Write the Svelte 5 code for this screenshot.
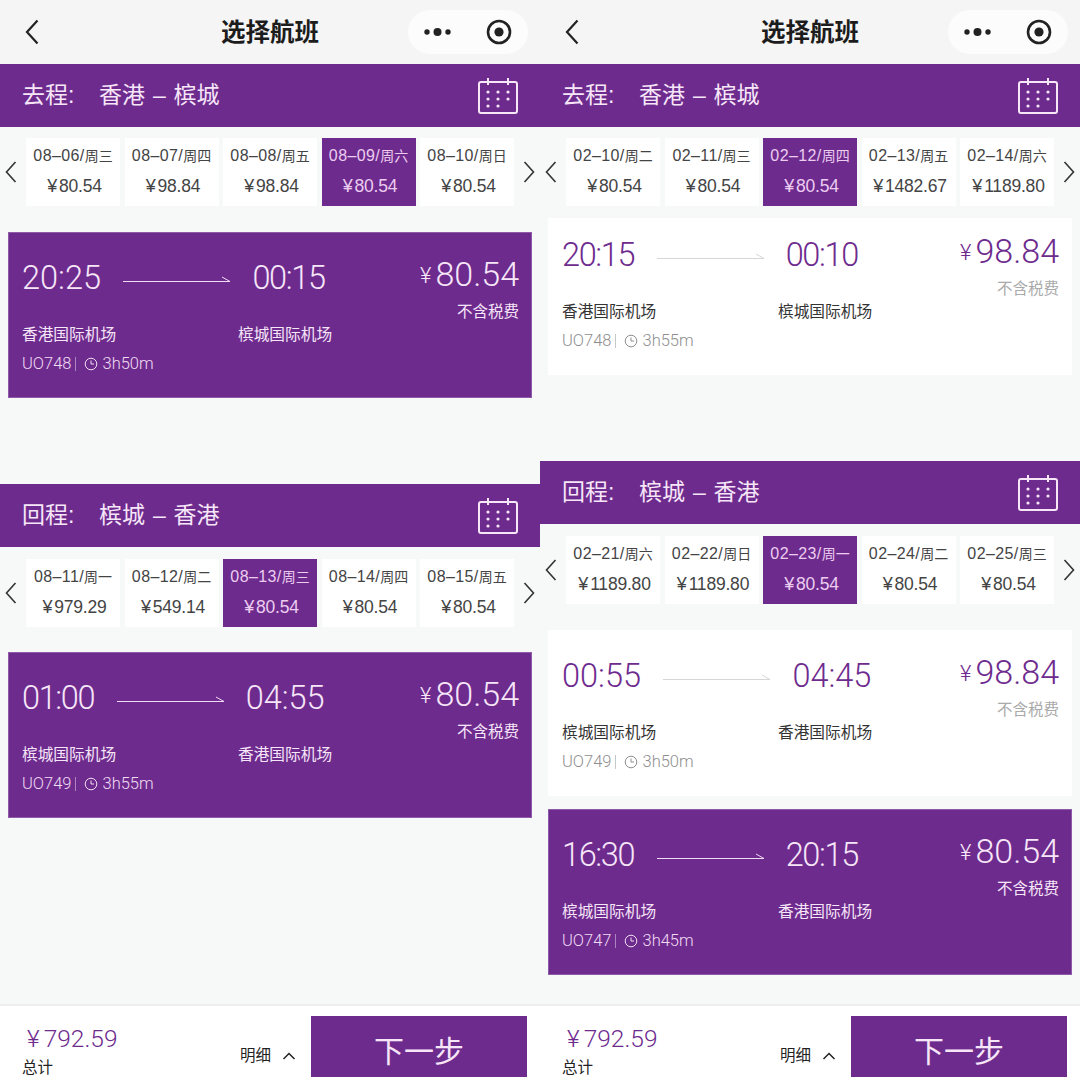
<script>
  const phones = [
    {
      legs: [
        {
          label: '去程:', route: '香港 – 槟城', gap: 'gap-a',
          dates: [
            ['08–06', '周三', '80.54'], ['08–07', '周四', '98.84'], ['08–08', '周五', '98.84'],
            ['08–09', '周六', '80.54', true], ['08–10', '周日', '80.54']
          ],
          flights: [
            { dep: '20:25', arr: '00:15', price: '80.54', from: '香港国际机场', to: '槟城国际机场', no: 'UO748', dur: '3h50m', on: true }
          ]
        },
        {
          label: '回程:', route: '槟城 – 香港', gap: 'gap-b',
          dates: [
            ['08–11', '周一', '979.29'], ['08–12', '周二', '549.14'], ['08–13', '周三', '80.54', true],
            ['08–14', '周四', '80.54'], ['08–15', '周五', '80.54']
          ],
          flights: [
            { dep: '01:00', arr: '04:55', price: '80.54', from: '槟城国际机场', to: '香港国际机场', no: 'UO749', dur: '3h55m', on: true }
          ]
        }
      ]
    },
    {
      legs: [
        {
          label: '去程:', route: '香港 – 槟城', gap: 'gap-c',
          dates: [
            ['02–10', '周二', '80.54'], ['02–11', '周三', '80.54'], ['02–12', '周四', '80.54', true],
            ['02–13', '周五', '1482.67'], ['02–14', '周六', '1189.80']
          ],
          flights: [
            { dep: '20:15', arr: '00:10', price: '98.84', from: '香港国际机场', to: '槟城国际机场', no: 'UO748', dur: '3h55m' }
          ]
        },
        {
          label: '回程:', route: '槟城 – 香港', gap: 'gap-d',
          dates: [
            ['02–21', '周六', '1189.80'], ['02–22', '周日', '1189.80'], ['02–23', '周一', '80.54', true],
            ['02–24', '周二', '80.54'], ['02–25', '周三', '80.54']
          ],
          flights: [
            { dep: '00:55', arr: '04:45', price: '98.84', from: '槟城国际机场', to: '香港国际机场', no: 'UO749', dur: '3h50m' },
            { dep: '16:30', arr: '20:15', price: '80.54', from: '槟城国际机场', to: '香港国际机场', no: 'UO747', dur: '3h45m', on: true }
          ]
        }
      ]
    }
  ];

  // Roboto's digits are all one width, a 1 in the reference is about 7px narrower
  const tighten = (t) => -1.35 * (t.split('1').length - 1);
</script>

<div class="screens">
  {#each phones as phone}
    <div class="phone">
      <div class="nav">
        <svg class="back" width="14" height="26" viewBox="0 0 14 26" fill="none" stroke="#222" stroke-width="2.2">
          <path d="M12.5 1.5 2 13l10.5 11.5" />
        </svg>
        <div class="title">选择航班</div>
        <div class="capsule">
          <svg width="27" height="12" viewBox="0 0 27 12" fill="#222">
            <circle cx="3" cy="6" r="2.7" /><circle cx="13.5" cy="6" r="4" /><circle cx="24" cy="6" r="2.7" />
          </svg>
          <svg width="26" height="26" viewBox="0 0 26 26">
            <circle cx="13" cy="13" r="11" fill="none" stroke="#222" stroke-width="2.6" />
            <circle cx="13" cy="13" r="4.6" fill="#222" />
          </svg>
        </div>
      </div>

      {#each phone.legs as leg}
        <div class="leg-head {leg.gap}">
          <span class="leg-label">{leg.label}</span>
          <span class="leg-route">{leg.route}</span>
          <svg class="cal" width="42" height="38" viewBox="0 0 42 38" fill="none" stroke="#f6e6f8" stroke-width="2">
            <rect x="2" y="5" width="38" height="31" rx="2" />
            <path d="M11 1v7M31 1v7" />
            <g fill="#f6e6f8" stroke="none">
              <circle cx="11" cy="15" r="1.6" /><circle cx="21" cy="15" r="1.6" /><circle cx="31" cy="15" r="1.6" />
              <circle cx="11" cy="22" r="1.6" /><circle cx="21" cy="22" r="1.6" /><circle cx="31" cy="22" r="1.6" />
              <circle cx="11" cy="29" r="1.6" /><circle cx="21" cy="29" r="1.6" />
            </g>
          </svg>
        </div>

        <div class="dates">
          <svg class="side" width="12" height="22" viewBox="0 0 12 22" fill="none" stroke="#333" stroke-width="1.6">
            <path d="M10.5 1 1.5 11l9 10" />
          </svg>
          {#each leg.dates as d}
            <div class="date" class:sel={d[3]}>
              <div class="date-day">{d[0]}/<span class="week">{d[1]}</span></div>
              <div class="date-price"><span class="yen">¥</span>{d[2]}</div>
            </div>
          {/each}
          <svg class="side" width="12" height="22" viewBox="0 0 12 22" fill="none" stroke="#333" stroke-width="1.6">
            <path d="M1.5 1l9 10-9 10" />
          </svg>
        </div>

        <div class="flights">
          {#each leg.flights as f}
            <div class="flight" class:on={f.on}>
              <div class="flight-top">
                <span class="time" style="letter-spacing: {tighten(f.dep)}px">{f.dep}</span>
                <svg class="arrow" width="108" height="6" viewBox="0 0 108 6" fill="none" stroke="currentColor" stroke-width="1">
                  <path d="M0 5.5h107L99 1" />
                </svg>
                <span class="time" style="letter-spacing: {tighten(f.arr)}px">{f.arr}</span>
                <div class="price-box">
                  <div class="price"><span class="price-yen">¥</span>{f.price}</div>
                  <div class="tax">不含税费</div>
                </div>
              </div>
              <div class="airports">
                <span>{f.from}</span>
                <span>{f.to}</span>
              </div>
              <div class="meta">
                <span>{f.no}</span>
                <i class="bar"></i>
                <svg class="clock" width="14" height="14" viewBox="0 0 14 14" fill="none" stroke="currentColor" stroke-width="1">
                  <circle cx="7" cy="7" r="5.8" /><path d="M7 3.5V7h3" />
                </svg>
                <span>{f.dur}</span>
              </div>
            </div>
          {/each}
        </div>
      {/each}

      <div class="footer">
        <div class="total">
          <div class="total-price"><span>¥</span>792.59</div>
          <div class="total-label">总计</div>
        </div>
        <div class="detail">
          明细
          <svg width="14" height="8" viewBox="0 0 14 8" fill="none" stroke="#222" stroke-width="1.5">
            <path d="M1.5 7 7 1.5 12.5 7" />
          </svg>
        </div>
        <div class="next">下一步</div>
      </div>
    </div>
  {/each}
</div>

<style>
  :global(body) {
    margin: 0;
    background: #f7f8f8;
  }

  .screens {
    display: grid;
    grid-template-columns: 540px 540px;
    width: 1080px;
    height: 1077px;
    overflow: hidden;
    font-family: "Liberation Sans", "Noto Sans CJK SC", sans-serif;
    color: #222;
  }

  .phone {
    display: flex;
    flex-direction: column;
    height: 1077px;
    overflow: hidden;
    background: #f7f8f8;
  }

  .nav {
    display: grid;
    grid-template-columns: 1fr auto 1fr;
    align-items: center;
    height: 64px;
    flex-shrink: 0;
    padding: 0 12px;
    box-sizing: border-box;
    background: #f5f5f5;
  }

  .back { margin-left: 13px; }

  .title {
    font-size: 24.5px;
    font-weight: 700;
    color: #1c1c1c;
    line-height: 65px;
    height: 64px;
  }

  .capsule {
    justify-self: end;
    display: flex;
    align-items: center;
    justify-content: space-between;
    width: 120px;
    height: 44px;
    padding: 0 16px;
    box-sizing: border-box;
    background: #fcfcfc;
    border-radius: 22px;
  }

  .leg-head {
    display: flex;
    align-items: center;
    flex-shrink: 0;
    height: 63px;
    padding: 0 21px 0 22px;
    box-sizing: border-box;
    background: #6e2b8e;
    color: #f6e6f8;
    font-size: 23px;
  }

  .gap-b { margin-top: 86px; }
  .gap-d { margin-top: 86px; }

  .leg-label {
    width: 77px;
    margin-top: -5px;
  }

  .leg-route {
    margin-top: -5px;
    word-spacing: 1.5px;
  }

  .cal { margin-left: auto; }

  .dates {
    display: flex;
    align-items: center;
    height: 68px;
    flex-shrink: 0;
    margin-top: 11px;
    gap: 4.5px;
  }

  .gap-b + .dates, .gap-d + .dates { margin-top: 12px; }

  .side {
    flex: 0 0 12px;
    margin: 0 4.75px;
  }

  .date {
    flex: 1;
    height: 68px;
    background: #fff;
    color: #444;
    text-align: center;
  }

  .date.sel {
    background: #6e2b8e;
    color: #eccdf0;
  }

  .date-day {
    margin-top: 8px;
    font-size: 16px;
    line-height: 20px;
    letter-spacing: 0.4px;
  }

  .week {
    font-size: 14px;
    letter-spacing: 0;
  }

  .date-price {
    margin-top: 10px;
    padding-left: 3px;
    font-size: 17.5px;
    line-height: 20px;
    letter-spacing: -0.2px;
  }

  .yen {
    font-size: 18px;
    margin-right: 2px;
  }

  .flights {
    display: flex;
    flex-direction: column;
    margin: 26px 8px 0;
    gap: 13px;
  }

  .gap-b + .dates + .flights { margin-top: 25px; }
  .gap-c + .dates + .flights { margin-top: 12px; }

  .flight {
    height: 166px;
    padding: 0 13px 0 14px;
    box-sizing: border-box;
    background: #fff;
    color: #6e2b8e;
  }

  .flight.on {
    background: #6e2b8e;
    color: #f6e6f8;
    outline: 1px solid #8f5aa8;
    outline-offset: -1px;
  }

  /* this card starts scrolled: 9px less on top */
  .gap-c + .dates + .flights .flight { height: 157px; }
  .gap-c + .dates + .flights .flight-top { height: 63px; padding-top: 17px; }

  .flight-top {
    display: flex;
    align-items: flex-start;
    height: 72px;
    padding-top: 26px;
    box-sizing: border-box;
  }

  .time {
    font-family: "Roboto", "Liberation Sans", sans-serif;
    font-weight: 300;
    font-size: 32.5px;
    line-height: 40px;
  }

  .arrow {
    margin: 18px 21px 0 22.5px;
    color: #d6d6d6;
    flex-shrink: 0;
  }

  .on .arrow { color: #f0dcf3; }

  .price-box {
    margin-left: auto;
    margin-top: -4px;
    text-align: right;
  }

  .price {
    font-family: "Roboto", "Liberation Sans", sans-serif;
    font-weight: 300;
    font-size: 34px;
    line-height: 40px;
  }

  .price-yen {
    font-size: 22px;
    margin-right: 4px;
    vertical-align: 3px;
  }

  .tax {
    margin-top: 5px;
    font-size: 15.5px;
    line-height: 22px;
    color: #aaa;
  }

  .on .tax { color: #f6e6f8; }

  .airports {
    display: grid;
    grid-template-columns: 216px 1fr;
    margin-top: 19px;
    font-size: 15.7px;
    line-height: 24px;
    color: #333;
  }

  .on .airports { color: #f6e6f8; }

  .meta {
    display: flex;
    align-items: center;
    gap: 4px;
    margin-top: 5px;
    font-family: "Roboto", "Liberation Sans", sans-serif;
    font-weight: 300;
    font-size: 16.5px;
    line-height: 24px;
    color: #8f8f8f;
  }

  .on .meta { color: #f0dcf3; }

  .bar {
    width: 1px;
    height: 14px;
    background: currentColor;
    opacity: 0.5;
  }

  .clock { margin-left: 4px; }

  .footer {
    display: flex;
    align-items: flex-start;
    margin-top: auto;
    flex-shrink: 0;
    height: 73px;
    background: #fff;
    border-top: 2px solid #eeeeee;
    box-sizing: border-box;
    overflow: hidden;
  }

  .total {
    width: 240px;
    padding: 19px 0 0 22px;
    box-sizing: border-box;
  }

  .total-price {
    color: #6e2b8e;
    font-family: "Roboto", "Liberation Sans", sans-serif;
    font-weight: 300;
    font-size: 24.5px;
    line-height: 28px;
    padding-left: 5px;
  }

  .total-price span { margin-right: 4px; }

  .total-label {
    font-size: 15.5px;
    line-height: 22px;
    margin-top: 4px;
  }

  .detail {
    display: flex;
    align-items: center;
    gap: 11px;
    width: 71px;
    margin-top: 39px;
    font-size: 15.5px;
    line-height: 22px;
  }

  .next {
    width: 216px;
    height: 80px;
    margin-top: 10px;
    padding-top: 14px;
    box-sizing: border-box;
    background: #6e2b8e;
    color: #f6e6f8;
    text-align: center;
    font-size: 30px;
    line-height: 44px;
  }
</style>
